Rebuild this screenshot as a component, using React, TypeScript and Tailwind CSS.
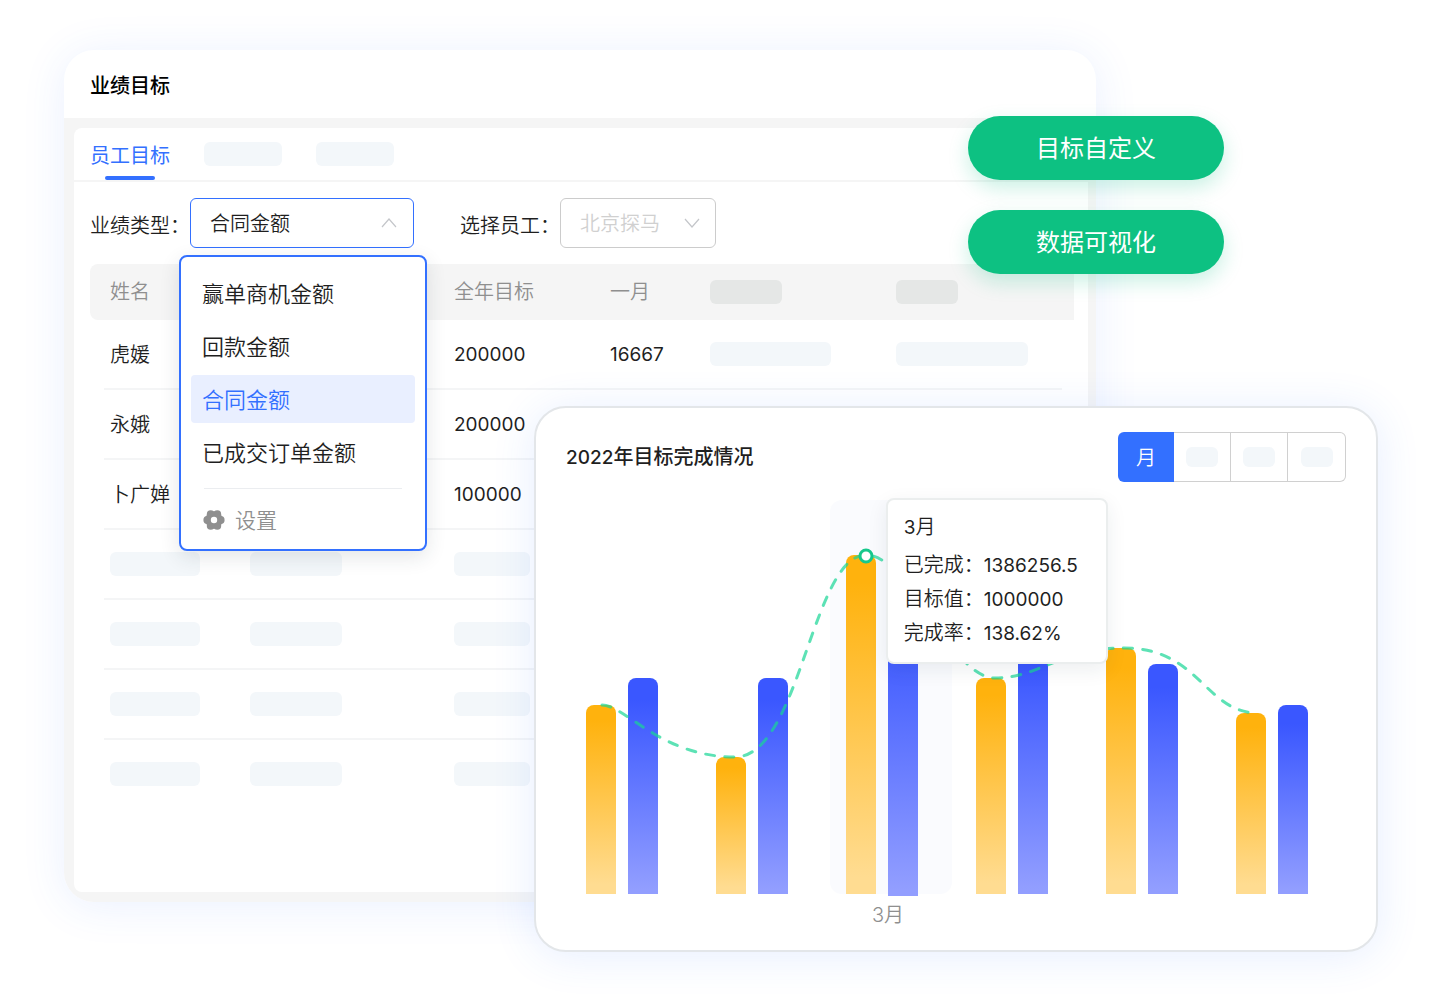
import React from "react";
import clsx from "clsx";

const menuItems = ["赢单商机金额", "回款金额", "合同金额", "已成交订单金额"];

const tableRows = [
  { name: "虎媛", year: "200000", month: "16667" },
  { name: "永娥", year: "200000" },
  { name: "卜广婵", year: "100000" },
  {},
  {},
  {},
  {},
];

const months = [
  { x: 20, done: 207, target: 180 },
  { x: 150, done: 259, target: 180 },
  { x: 280, done: 57, target: 102 },
  { x: 410, done: 180, target: 142 },
  { x: 540, done: 150, target: 166 },
  { x: 670, done: 215, target: 207 },
];

const tooltipRows = [
  { label: "已完成：", value: "1386256.5" },
  { label: "目标值：", value: "1000000" },
  { label: "完成率：", value: "138.62%" },
];

function barPath(x: number, top: number, bottom: number) {
  return `M${x} ${bottom}V${top + 8}a8 8 0 0 1 8-8h14a8 8 0 0 1 8 8V${bottom}Z`;
}

function Skeleton({ className }: { className?: string }) {
  return <div className={clsx("rounded-md", className)} />;
}

function Num({ bold, children }: { bold?: boolean; children: React.ReactNode }) {
  return (
    <span
      className={clsx(
        "font-['Inter',sans-serif] text-[19px]",
        bold ? "font-medium" : "font-normal"
      )}
    >
      {children}
    </span>
  );
}

function Chevron({ up, className }: { up?: boolean; className?: string }) {
  return (
    <svg
      viewBox="0 0 16 10"
      fill="none"
      stroke="currentColor"
      aria-hidden="true"
      className={clsx("pointer-events-none absolute h-[10px] w-4", className)}
    >
      <path d={up ? "M1 9L8 1L15 9" : "M1 1L8 9L15 1"} strokeWidth="1.2" />
    </svg>
  );
}

function GearIcon() {
  return (
    <svg viewBox="0 0 22 22" aria-hidden="true" className="h-[22px] w-[22px]">
      <g fill="#8f8f8f">
        <circle cx="11" cy="11" r="8.8" />
        <circle cx="17.7" cy="11" r="3.9" />
        <circle cx="4.3" cy="11" r="3.9" />
        <circle cx="14.3" cy="5.2" r="3.9" />
        <circle cx="7.7" cy="5.2" r="3.9" />
        <circle cx="14.3" cy="16.8" r="3.9" />
        <circle cx="7.7" cy="16.8" r="3.9" />
      </g>
      <circle cx="11" cy="11" r="3.2" fill="#fff" />
    </svg>
  );
}

function TypeMenu() {
  return (
    <div className="absolute top-[57px] -left-[11px] z-10 w-[248px] rounded-lg border-2 border-[#3370ff] bg-white px-[10px] pt-3 pb-[11px] shadow-[0_6px_20px_rgba(30,50,60,0.12)]">
      <ul className="flex flex-col gap-[5px]">
        {menuItems.map((item) => (
          <li key={item}>
            <button
              type="button"
              className={clsx(
                "flex h-12 w-full items-center rounded px-[11px] pb-[2px] text-[22px]",
                item === "合同金额" && "bg-[#e9efff] text-[#3370ff]"
              )}
            >
              {item}
            </button>
          </li>
        ))}
      </ul>
      <hr className="mx-[13px] mt-3 border-t border-[#ebedf0]" />
      <button
        type="button"
        className="mt-[13px] flex h-9 items-center gap-[10px] px-3 text-[21px] text-[#8f8f8f]"
      >
        <GearIcon />
        设置
      </button>
    </div>
  );
}

function Filters() {
  return (
    <div className="mt-4 flex items-center pl-4">
      <label htmlFor="type" className="pt-1">
        业绩类型：
      </label>
      <div className="relative">
        <select
          id="type"
          defaultValue="合同金额"
          className="h-[50px] w-56 appearance-none rounded-md border border-[#3370ff] bg-white pl-[19px]"
        >
          {menuItems.map((item) => (
            <option key={item}>{item}</option>
          ))}
        </select>
        <Chevron up className="top-5 right-[17px] text-[#c4c6ca]" />
        <TypeMenu />
      </div>
      <label htmlFor="staff" className="ml-[46px] pt-1">
        选择员工：
      </label>
      <div className="relative">
        <select
          id="staff"
          className="h-[50px] w-[156px] appearance-none rounded-md border border-[#cccccc] bg-white pl-[19px] text-[#d0d0d0]"
        >
          <option>北京探马</option>
        </select>
        <Chevron className="top-5 right-4 text-[#c4c6ca]" />
      </div>
    </div>
  );
}

function TargetTable() {
  return (
    <div className="mt-4 pr-[14px] pb-[82px] pl-4">
      <table className="w-full table-fixed border-separate border-spacing-0 text-left">
        <thead>
          <tr className="h-14 bg-[#f5f5f5] text-[#8f8f8f]">
            <th className="w-40 rounded-l-lg pb-[2px] pl-5 font-[350]">姓名</th>
            <th className="w-[204px]" />
            <th className="w-[156px] pb-[2px] font-[350]">全年目标</th>
            <th className="w-[100px] pb-[2px] font-[350]">一月</th>
            <th className="w-[186px]">
              <Skeleton className="h-6 w-[72px] bg-[#e5e7e6]" />
            </th>
            <th>
              <Skeleton className="h-6 w-[62px] bg-[#e5e7e6]" />
            </th>
          </tr>
        </thead>
        <tbody>
          {tableRows.map((row, i) => {
            const line = clsx(
              "flex h-[70px] items-center border-b-2",
              i < tableRows.length - 1 ? "border-[#f4f5f6]" : "border-transparent"
            );
            return (
              <tr key={i}>
                <td className="pl-[14px]">
                  <div className={clsx(line, "pl-[6px]")}>
                    {row.name ?? <Skeleton className="h-6 w-[90px] bg-[#f3f7fa]" />}
                  </div>
                </td>
                <td>
                  <div className={line}>
                    {!row.name && <Skeleton className="h-6 w-[92px] bg-[#f3f7fa]" />}
                  </div>
                </td>
                <td>
                  <div className={line}>
                    {row.year ? (
                      <p>
                        <Num>{row.year}</Num>
                      </p>
                    ) : (
                      <Skeleton className="h-6 w-[76px] bg-[#f3f7fa]" />
                    )}
                  </div>
                </td>
                <td>
                  <div className={line}>
                    {row.month && (
                      <p>
                        <Num>{row.month}</Num>
                      </p>
                    )}
                  </div>
                </td>
                <td>
                  <div className={line}>
                    {row.month && <Skeleton className="h-6 w-[121px] bg-[#f3f7fa]" />}
                  </div>
                </td>
                <td className="pr-3">
                  <div className={line}>
                    {row.month && <Skeleton className="h-6 w-[132px] bg-[#f3f7fa]" />}
                  </div>
                </td>
              </tr>
            );
          })}
        </tbody>
      </table>
    </div>
  );
}

function TargetPanel() {
  return (
    <section className="col-start-1 row-start-1 mr-[282px] self-start rounded-[30px] bg-white shadow-[0_4px_44px_rgba(51,112,255,0.10)]">
      <h1 className="flex h-[68px] items-center px-[26px] pt-[2px] font-medium text-black">
        业绩目标
      </h1>
      <div className="rounded-b-[30px] bg-[#f5f5f5] pt-[10px] pr-2 pb-[10px] pl-[10px]">
        <div className="rounded-lg bg-white">
          <nav className="flex h-[54px] gap-[34px] border-b-2 border-[#f5f5f5] pl-4">
            <a
              href="#staff"
              className="flex flex-col items-center font-normal text-[#3370ff]"
            >
              <span className="flex h-12 items-center pt-[6px]">员工目标</span>
              <span className="h-1 w-[50px] rounded-full bg-[#3370ff]" />
            </a>
            <Skeleton className="mt-[14px] h-6 w-[78px] bg-[#f3f7fa]" />
            <Skeleton className="mt-[14px] h-6 w-[78px] bg-[#f3f7fa]" />
          </nav>
          <Filters />
          <TargetTable />
        </div>
      </div>
    </section>
  );
}

function Chart() {
  return (
    <div className="relative mt-4">
      <svg viewBox="0 0 780 436" className="block h-auto w-full">
        <defs>
          <linearGradient id="done" x1="0" y1="0" x2="0" y2="1">
            <stop offset="0.08" stopColor="#ffb20d" />
            <stop offset="0.95" stopColor="#ffdc91" />
          </linearGradient>
          <linearGradient id="target" x1="0" y1="0" x2="0" y2="1">
            <stop offset="0.1" stopColor="#3a57ff" />
            <stop offset="0.98" stopColor="#929eff" />
          </linearGradient>
        </defs>
        <rect x="264" y="2" width="122" height="394" rx="12" fill="#fafbfe" />
        {months.map((m, i) => (
          <g key={m.x}>
            <path d={barPath(m.x, m.done, 396)} fill="url(#done)" />
            <path
              d={barPath(m.x + 42, m.target, i === 2 ? 398 : 396)}
              fill="url(#target)"
            />
          </g>
        ))}
        <path
          d="M36 207C59 207 95 259 169 259C234 259 246 57 300 57C344 57 384 180 429 180C474 180 494 150 558 150C634 150 639 215 692 215"
          fill="none"
          stroke="#18d696"
          strokeOpacity="0.7"
          strokeWidth="3"
          strokeLinecap="round"
          strokeDasharray="9 10.3"
        />
        <circle cx="300" cy="58" r="6" fill="#fff" stroke="#17c88c" strokeWidth="3" />
        <text
          x="322"
          y="424"
          textAnchor="middle"
          fill="#8f8f8f"
          className="font-['Inter','Noto_Sans_CJK_SC',sans-serif] text-[20px]"
        >
          3月
        </text>
      </svg>
      <div className="absolute top-0 left-[41%] w-[222px] rounded-lg border-2 border-[#ebeeee] bg-white px-4 pt-[10px] pb-3 leading-8 shadow-[0_6px_20px_rgba(30,50,60,0.08)]">
        <p className="mb-1">
          <Num>3</Num>月
        </p>
        {tooltipRows.map((row) => (
          <p key={row.label}>
            {row.label}
            <Num>{row.value}</Num>
          </p>
        ))}
      </div>
    </div>
  );
}

function ChartCard() {
  return (
    <section className="z-20 col-start-1 row-start-1 mt-[356px] ml-[470px] self-start rounded-[32px] border-2 border-[#e3e6e9] bg-white px-[30px] pt-6 pb-4 shadow-[0_4px_44px_rgba(51,112,255,0.12)]">
      <div className="flex items-center justify-between">
        <h2 className="font-medium">
          <Num bold>2022</Num>年目标完成情况
        </h2>
        <div className="flex h-[50px]">
          <button
            type="button"
            className="w-14 rounded-l-md bg-[#3370ff] text-white"
          >
            月
          </button>
          <div className="flex divide-x divide-[#d0d0d0] rounded-r-md border border-l-0 border-[#d0d0d0]">
            {[0, 1, 2].map((i) => (
              <button
                key={i}
                type="button"
                aria-label="切换"
                className="flex w-[57px] items-center justify-center"
              >
                <Skeleton className="h-5 w-8 bg-[#f3f7fa]" />
              </button>
            ))}
          </div>
        </div>
      </div>
      <Chart />
    </section>
  );
}

function Tags() {
  return (
    <div className="z-10 col-start-1 row-start-1 mt-[66px] mr-[154px] flex flex-col gap-[30px] self-start justify-self-end">
      {["目标自定义", "数据可视化"].map((tag) => (
        <button
          key={tag}
          type="button"
          className="h-16 w-64 rounded-full bg-[#0dc182] pb-[2px] text-2xl font-normal text-white shadow-[0_8px_20px_rgba(13,193,130,0.22)]"
        >
          {tag}
        </button>
      ))}
    </div>
  );
}

export default function App() {
  return (
    <main className="grid min-h-screen grid-cols-1 bg-white pt-[50px] pr-[62px] pb-12 pl-16 font-['Noto_Sans_CJK_SC',sans-serif] text-[20px] font-[350] text-[#1f1f1f]">
      <TargetPanel />
      <Tags />
      <ChartCard />
    </main>
  );
}
